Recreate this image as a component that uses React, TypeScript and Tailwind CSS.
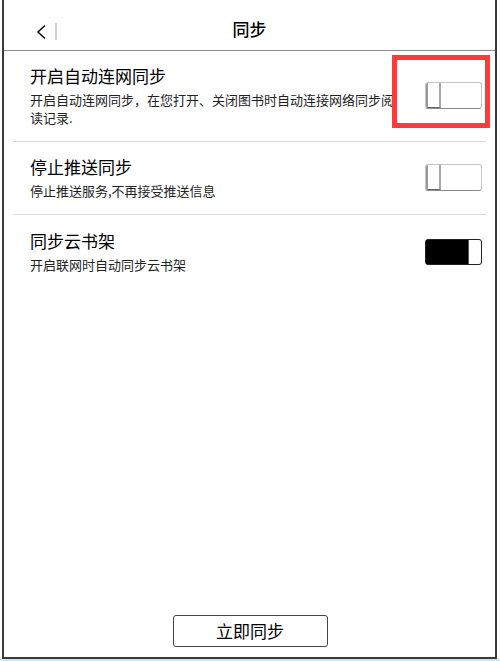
import React from "react";

const font = { fontFamily: '"Noto Sans CJK SC", "Noto Sans", sans-serif' };

type Row = { title: string; desc: string; on: boolean };

const rows: Row[] = [
  {
    title: "开启自动连网同步",
    desc: "开启自动连网同步，在您打开、关闭图书时自动连接网络同步阅读记录.",
    on: false,
  },
  { title: "停止推送同步", desc: "停止推送服务,不再接受推送信息", on: false },
  { title: "同步云书架", desc: "开启联网时自动同步云书架", on: true },
];

function Toggle({ on }: { on: boolean }) {
  if (on) {
    return (
      <div className="flex h-[26px] w-[57px] overflow-hidden rounded-[3px] border border-[#222] bg-black">
        <div className="flex-1" />
        <div className="w-[13px] border-l border-[#555] bg-white" />
      </div>
    );
  }
  return (
    <div className="flex h-[27px] w-[57px] overflow-hidden rounded-[3px] border border-[#c4c4c4] border-b-[#8a8a8a] bg-white">
      <div className="w-[15px] border-l-2 border-r-2 border-l-[#9a9a9a] border-r-[#a8a8a8] border-b border-b-[#666] bg-white" />
      <div className="flex-1" />
    </div>
  );
}

export default function App() {
  return (
    <div className="relative h-[661px] w-[500px] bg-white text-black" style={font}>
      <div className="ml-[2px] flex h-[659px] w-[495px] flex-col border-x-2 border-b-2 border-[#3a3a3a]">
        {/* header */}
        <div className="relative flex h-[51px] items-center justify-center border-b border-[#8c8c8c] pt-[8px]">
          <div className="absolute left-[31px] top-[23px] flex items-center">
            <svg width="12" height="16" viewBox="0 0 12 16">
              <polyline points="10,1.5 3,8 10,14.5" fill="none" stroke="#111" strokeWidth="1.6" />
            </svg>
            <div className="ml-[8px] h-[17px] w-[2px] bg-[#d0d0d0]" />
          </div>
          <span className="text-[17px] font-medium leading-[24px]">同步</span>
        </div>

        {rows.map((r, i) => (
          <div
            key={i}
            className={
              i < rows.length - 1
                ? "mx-[9px] flex items-center border-b border-[#dcdcdc] pb-[14px] pl-[17px] pr-[4px] pt-[13px]"
                : "mx-[9px] flex items-center pb-[13px] pl-[17px] pr-[4px] pt-[14px]"
            }
          >
            <div className="flex-1">
              <div className="text-[17px] leading-[24px]">{r.title}</div>
              <div className="mt-[3px] max-w-[370px] text-[13px] leading-[18px] text-[#222]">{r.desc}</div>
            </div>
            <Toggle on={r.on} />
          </div>
        ))}

        <div className="flex-1" />

        <div className="mb-[10px] flex justify-center">
          <button className="ml-[1px] h-[32px] w-[155px] rounded-[3px] border border-[#444] bg-white text-[17px] leading-[24px]">
            立即同步
          </button>
        </div>
      </div>
      <div className="h-[2px] w-full bg-[#cfe3f5]" />

      {/* highlight box */}
      <div className="absolute left-[392px] top-[55px] h-[73px] w-[98px] border-[5px] border-[#ff3a3a]" />
    </div>
  );
}
